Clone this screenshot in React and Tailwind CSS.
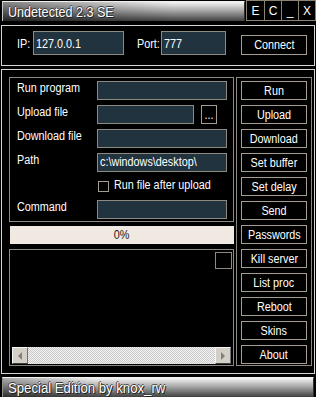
import React from "react";

const F = "font-['Liberation_Sans',Arial,sans-serif]";

function T({ children, c = false }) {
  return (
    <span className={`inline-block whitespace-nowrap scale-x-[0.9] ${c ? "origin-center" : "origin-left"}`}>
      {children}
    </span>
  );
}

function Btn({ children, className = "" }) {
  return (
    <div
      className={`flex items-center justify-center border border-[#a49d90] bg-black text-white text-[12px] leading-[12px] ${className}`}
    >
      <T c>{children}</T>
    </div>
  );
}

function Field({ className = "", children }) {
  return (
    <div
      className={`h-[19px] border border-[#8e8a82] bg-[#223340] text-white text-[12px] leading-[17px] pl-[2px] whitespace-nowrap overflow-hidden ${className}`}
    >
      {children ? <T>{children}</T> : null}
    </div>
  );
}

function Row({ label, children }) {
  return (
    <div className="flex h-[19px]">
      <div className="w-[80px] mt-[1px] text-[12px] leading-[12px] whitespace-nowrap">
        <T>{label}</T>
      </div>
      {children}
    </div>
  );
}

const sideButtons = [
  "Run",
  "Upload",
  "Download",
  "Set buffer",
  "Set delay",
  "Send",
  "Passwords",
  "Kill server",
  "List proc",
  "Reboot",
  "Skins",
  "About",
];

function ScrollArrow({ dir }) {
  return (
    <div className="w-[16px] h-[17px] bg-[#d4d0c8] border-t border-l border-t-[#f4f4f4] border-l-[#f4f4f4] border-b border-r border-b-[#404040] border-r-[#707070] flex items-center justify-center">
      <svg width="6" height="8" viewBox="0 0 6 8">
        {dir === "left" ? (
          <polygon points="5,0 5,8 1,4" fill="#808080" />
        ) : (
          <polygon points="1,0 1,8 5,4" fill="#808080" />
        )}
      </svg>
    </div>
  );
}

export default function App() {
  return (
    <div className={`w-[316px] h-[397px] bg-black text-white overflow-hidden flex flex-col ${F}`}>
      {/* Title row */}
      <div className="flex h-[22px]">
        <div className="ml-[2px] mt-[1px] w-[244px] h-[20px] border-t border-l border-t-[#f0f0f0] border-l-[#c8c8c8] border-r border-r-[#303030] bg-[linear-gradient(to_right,rgba(0,0,0,0.45),rgba(0,0,0,0)_70%),linear-gradient(to_bottom,#f4f4f4,#a8a8a8_45%,#404040)] flex items-center pl-[5px]">
          <span className="inline-block origin-left scale-x-[0.9] whitespace-nowrap text-[14px] leading-[14px] text-white [text-shadow:1px_1px_0_#202020,-1px_0_0_#404040,0_-1px_0_#404040]">
            Undetected 2.3 SE
          </span>
        </div>
        <div className="ml-[1px] flex h-[21px] border border-[#8c8272]">
          {["E", "C", "_", "X"].map((t, i) => (
            <div
              key={t}
              className={`w-[17px] h-full flex items-center justify-center text-[12px] leading-[12px] text-white ${
                i > 0 ? "border-l border-[#8c8272]" : ""
              }`}
            >
              {t}
            </div>
          ))}
        </div>
      </div>

      {/* Connect panel */}
      <div className="mt-[3px] ml-[1px] w-[314px] h-[41px] border border-[#d4d4d4] flex items-start pl-[15px] text-[12px]">
        <div className="w-[16px] mt-[12px] leading-[12px]">
          <T>IP:</T>
        </div>
        <div className="mt-[5px] w-[91px] h-[24px] border border-[#8e8a82] bg-[#223340] pl-[2px] pt-[2px] leading-[20px]">
          <T>127.0.0.1</T>
        </div>
        <div className="ml-[13px] w-[24px] mt-[12px] leading-[12px]">
          <T>Port:</T>
        </div>
        <div className="mt-[5px] w-[65px] h-[24px] border border-[#8e8a82] bg-[#223340] pl-[2px] pt-[2px] leading-[20px]">
          <T>777</T>
        </div>
        <Btn className="ml-[15px] mt-[9px] w-[66px] h-[20px]">Connect</Btn>
      </div>

      {/* Main frame */}
      <div className="mt-[3px] ml-[1px] w-[314px] h-[305px] border border-[#d4d4d4] flex items-start pl-[7px] pt-[7px]">
        {/* Left column */}
        <div className="w-[225px] flex flex-col">
          <div className="h-[145px] border border-[#8e8a82] pt-[3px] pl-[7px] flex flex-col">
            <Row label="Run program">
              <Field className="w-[130px]" />
            </Row>
            <div className="mt-[5px]">
              <Row label="Upload file">
                <Field className="w-[97px]" />
                <Btn className="ml-[7px] w-[16px] h-[19px]">...</Btn>
              </Row>
            </div>
            <div className="mt-[5px]">
              <Row label="Download file">
                <Field className="w-[130px]" />
              </Row>
            </div>
            <div className="mt-[5px]">
              <Row label="Path">
                <Field className="w-[130px]">c:\windows\desktop\</Field>
              </Row>
            </div>
            <div className="mt-[9px] flex items-start h-[11px] pl-[81px]">
              <div className="w-[11px] h-[11px] border border-[#a49d90]" />
              <div className="ml-[5px] -mt-[2px] text-[12px] leading-[12px] whitespace-nowrap">
                <T>Run file after upload</T>
              </div>
            </div>
            <div className="mt-[8px]">
              <Row label="Command">
                <Field className="w-[130px]" />
              </Row>
            </div>
          </div>

          <div className="mt-[4px] ml-[1px] w-[224px] h-[18px] bg-[#efe9e1] text-[#202020] text-[12px] leading-[18px] text-center">
            <T c>0%</T>
          </div>

          <div className="mt-[5px] h-[117px] border border-[#8e8a82] flex flex-col justify-between">
            <div className="self-end mt-[2px] mr-[1px] w-[17px] h-[17px] border border-[#8e8a82]" />
            <div className="ml-[2px] mb-[1px] w-[219px] h-[17px] flex">
              <ScrollArrow dir="left" />
              <div className="flex-1 h-[17px] bg-[repeating-conic-gradient(#c8c8c8_0%_25%,#f4f4f4_0%_50%)] bg-[length:2px_2px]" />
              <ScrollArrow dir="right" />
            </div>
          </div>
        </div>

        {/* Right panel */}
        <div className="ml-[2px] w-[76px] h-[289px] border border-[#8e8a82] pt-[3px] pl-[4px] flex flex-col gap-[5px]">
          {sideButtons.map((b) => (
            <Btn key={b} className="w-[66px] h-[19px] shrink-0">
              {b}
            </Btn>
          ))}
        </div>
      </div>

      {/* Bottom bar */}
      <div className="mt-[3px] ml-[2px] w-[312px] h-[20px] border-t border-l border-t-[#f0f0f0] border-l-[#909090] border-r border-r-[#303030] bg-[linear-gradient(to_right,rgba(0,0,0,0.3),rgba(0,0,0,0)_30%),linear-gradient(to_bottom,#f4f4f4,#a8a8a8_45%,#404040)] flex items-center pl-[5px]">
        <span className="inline-block origin-left scale-x-[0.94] whitespace-nowrap text-[14px] leading-[14px] text-white [text-shadow:1px_1px_0_#202020,-1px_0_0_#404040,0_-1px_0_#404040]">
          Special Edition by knox_rw
        </span>
      </div>
    </div>
  );
}
